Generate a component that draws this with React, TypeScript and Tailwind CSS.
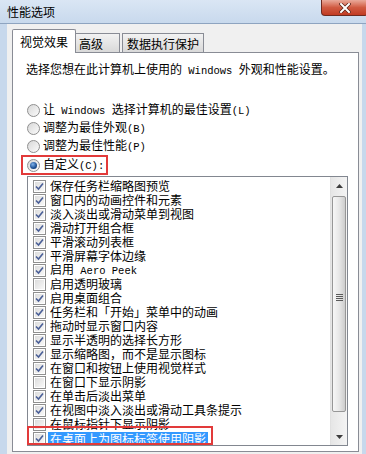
const items: [string, boolean][] = [
  ["保存任务栏缩略图预览", true],
  ["窗口内的动画控件和元素", true],
  ["淡入淡出或滑动菜单到视图", true],
  ["滑动打开组合框", true],
  ["平滑滚动列表框", true],
  ["平滑屏幕字体边缘", true],
  ["启用 Aero Peek", true],
  ["启用透明玻璃", false],
  ["启用桌面组合", true],
  ["任务栏和「开始」菜单中的动画", true],
  ["拖动时显示窗口内容", true],
  ["显示半透明的选择长方形", true],
  ["显示缩略图，而不是显示图标", true],
  ["在窗口和按钮上使用视觉样式", true],
  ["在窗口下显示阴影", false],
  ["在单击后淡出菜单", true],
  ["在视图中淡入淡出或滑动工具条提示", true],
  ["在鼠标指针下显示阴影", false],
];

// ascii runs render in a narrow mono face, like SimSun's half-width latin
function Txt({ s }: { s: string }) {
  const parts = s.split(/([\x20-\x7e]+)/);
  return (
    <>
      {parts.map((p, i) =>
        /[\x20-\x7e]/.test(p) ? (
          <span key={i} className="font-['Liberation_Mono',monospace] text-[10.5px] leading-[14px] whitespace-pre">
            {p}
          </span>
        ) : (
          <span key={i}>{p}</span>
        )
      )}
    </>
  );
}

function Check({ on }: { on: boolean }) {
  return (
    <div className="w-[13px] h-[13px] border border-[#8f8f8f] bg-white p-px shrink-0">
      <div className="w-full h-full bg-gradient-to-br from-[#dcdcdc] to-[#f8f8f8] flex items-center justify-center">
        {on && (
          <svg width="9" height="9" viewBox="0 0 9 9">
            <path d="M1 4.5 L3.5 7 L8 1.5" fill="none" stroke="#4a5f97" strokeWidth="1.6" />
          </svg>
        )}
      </div>
    </div>
  );
}

function Radio({ on }: { on?: boolean }) {
  return (
    <div className="w-[13px] h-[13px] rounded-full border border-[#8f8f8f] bg-gradient-to-br from-[#d8d8d8] to-[#fbfbfb] flex items-center justify-center shrink-0">
      {on && <div className="w-[7px] h-[7px] rounded-full bg-[radial-gradient(circle_at_40%_35%,#7fb2ea,#1b4f93_60%,#0b2d5c)]" />}
    </div>
  );
}

function App() {
  return (
    <div className="w-[366px] h-[454px] overflow-hidden flex flex-col bg-[#c7d8ec] font-['Noto_Sans_CJK_SC',sans-serif] text-[12px] leading-[14px] text-black">
      {/* Title bar */}
      <header className="h-[24px] shrink-0 flex justify-between bg-gradient-to-b from-[#dae6f4] to-[#c8d9ed] border-b border-[#8ea4c0]">
        <div className="pl-[7px] pt-[5px] text-[12px] leading-[14px]">性能选项</div>
        <div className="w-[47px] h-[16px] -mr-[2px] rounded-b-[4px] border border-t-0 border-[#6e2a1f] bg-gradient-to-b from-[#e9a99a] via-[#d05a41] to-[#c13a22] flex items-center justify-center">
          <svg width="12" height="10" viewBox="0 0 12 10">
            <path d="M2 1 L10 9 M10 1 L2 9" stroke="#5a2015" strokeWidth="3.4" strokeLinecap="square" />
            <path d="M2 1 L10 9 M10 1 L2 9" stroke="#ffffff" strokeWidth="2" strokeLinecap="square" />
          </svg>
        </div>
      </header>

      {/* Body */}
      <div className="flex-1 flex flex-col ml-[7px] mr-[4px] bg-[#f0f0f0] pl-[5px] pr-[3px] pt-[5px] pb-[4px]">
        {/* Tabs */}
        <div className="h-[23px] flex items-end shrink-0">
          <div className="relative z-10 -mb-px h-[24px] w-[64px] bg-white border border-b-0 border-[#898c95] rounded-t-[2px] pl-[7px] pt-[5px] text-[12px] leading-[14px]">
            视觉效果
          </div>
          <div className="h-[19px] w-[44px] border border-l-0 border-b-0 border-[#898c95] bg-gradient-to-b from-[#f2f2f2] to-[#d9d9d9] pl-[3px] pt-[3px] leading-[14px]">
            高级
          </div>
          <div className="h-[19px] w-[82px] ml-[2px] border border-b-0 border-[#898c95] bg-gradient-to-b from-[#f2f2f2] to-[#d9d9d9] pl-[4px] pt-[3px] leading-[14px]">
            数据执行保护
          </div>
        </div>

        {/* Panel */}
        <div className="flex-1 flex flex-col bg-white border border-[#898c95] pb-[5px]">
          <p className="mt-[9px] ml-[13px] leading-[14px] whitespace-nowrap">
            <Txt s="选择您想在此计算机上使用的 Windows 外观和性能设置。" />
          </p>

          <div className="mt-[23px] flex flex-col">
            {["让 Windows 选择计算机的最佳设置(L)", "调整为最佳外观(B)", "调整为最佳性能(P)"].map((t) => (
              <div key={t} className="h-[18px] flex items-center gap-[3px] ml-[14px]">
                <Radio />
                <span className="leading-[14px] whitespace-nowrap">
                  <Txt s={t} />
                </span>
              </div>
            ))}
            <div className="h-[20px] w-fit ml-[8px] border-2 border-[#e23a3a] flex items-center gap-[3px] pl-[4px] pr-[2px]">
              <Radio on />
              <span className="leading-[14px] whitespace-nowrap">
                <Txt s="自定义(C):" />
              </span>
            </div>
          </div>

          {/* List box */}
          <div className="relative mt-px ml-[14px] mr-[10px] h-[270px] border border-[#828790] flex">
            <div className="flex-1 pt-[2px] flex flex-col">
              {items.map(([t, on]) => (
                <div key={t} className="h-[14px] flex items-center gap-[4px] pl-[5px]">
                  <Check on={on} />
                  <span className="leading-[14px] whitespace-nowrap">
                    <Txt s={t} />
                  </span>
                </div>
              ))}
              <div className="h-[14px] flex items-center gap-[2px] pl-[5px]">
                <Check on />
                <span className="leading-[13px] bg-[#3399ff] text-white px-[2px] whitespace-nowrap">在桌面上为图标标签使用阴影</span>
              </div>
            </div>

            {/* Scrollbar */}
            <div className="w-[17px] flex flex-col bg-gradient-to-r from-[#e6e6e6] to-[#f4f4f4] border-l border-[#e0e0e0]">
              <div className="h-[17px] flex items-center justify-center">
                <svg width="7" height="4" viewBox="0 0 7 4">
                  <path d="M0 4 L3.5 0 L7 4 Z" fill="#3c3c3c" />
                </svg>
              </div>
              <div className="h-[216px] mt-[2px] mx-px border border-[#979797] rounded-[2px] bg-gradient-to-r from-[#f7f7f7] via-[#e8e8e8] to-[#cdcdcd] flex items-center justify-center pb-[14px]">
                <div className="flex flex-col gap-[1px]">
                  <div className="w-[7px] h-px bg-[#5a5a5a]" />
                  <div className="w-[7px] h-px bg-[#5a5a5a]" />
                  <div className="w-[7px] h-px bg-[#5a5a5a]" />
                  <div className="w-[7px] h-px bg-[#5a5a5a]" />
                </div>
              </div>
              <div className="flex-1" />
              <div className="h-[17px] flex items-center justify-center">
                <svg width="7" height="4" viewBox="0 0 7 4">
                  <path d="M0 0 L7 0 L3.5 4 Z" fill="#3c3c3c" />
                </svg>
              </div>
            </div>

            {/* red annotation around the selected row */}
            <div className="absolute -left-px bottom-0 w-[186px] h-[19px] border-2 border-[#e23a3a]" />
          </div>
        </div>
      </div>
    </div>
  );
}

export default App;
